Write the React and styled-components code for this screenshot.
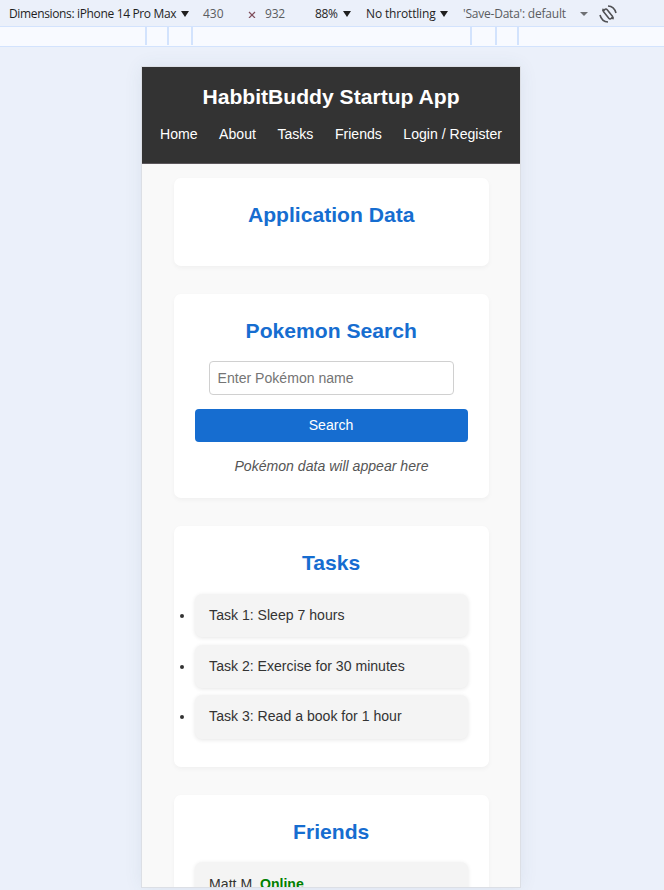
import React from "react";
import styled, { createGlobalStyle } from "styled-components";

const GlobalStyle = createGlobalStyle`
  *, *::before, *::after { box-sizing: border-box; }
  html, body { margin: 0; padding: 0; background: #ebf0fa; }
  body { height: 890px; overflow: hidden; font-family: "Liberation Sans", Arial, sans-serif; }
`;

const Screen = styled.div`
  width: 664px;
  height: 890px;
  overflow: hidden;
  background: #ebf0fa;
`;

const Toolbar = styled.div`
  display: flex;
  align-items: center;
  height: 26px;
  padding: 1px 0 0 9px;
  font-family: "Open Sans", "Noto Sans", sans-serif;
  font-size: 12px;
  color: #1f1f1f;
`;

const Cell = styled.div`
  display: flex;
  align-items: center;
  flex: none;
  width: ${(p) => p.$width}px;
  height: 22px;
  white-space: nowrap;
  color: ${(p) => (p.$muted ? "#5a5c60" : "#1f1f1f")};
`;

const Label = styled.span`
  flex: none;
  width: ${(p) => p.$width}px;
  letter-spacing: ${(p) => p.$spacing || 0}px;
`;

const Caret = styled.svg`
  display: block;
  flex: none;
  width: 8px;
  height: 6px;
  fill: ${(p) => (p.$muted ? "#6e7074" : "#1f1f1f")};
`;

const Icon = styled.svg`
  display: block;
  flex: none;
`;

const Ruler = styled.div`
  display: flex;
  height: 21px;
  border-top: 1px solid #d3e3fd;
  border-bottom: 1px solid #d3e3fd;
  background: #f8faff;
`;

const Segment = styled.div`
  flex: none;
  width: ${(p) => p.$width}px;
  height: 18px;
  border-right: 2px solid #d3e3fd;
`;

const Stage = styled.div`
  display: flex;
  justify-content: center;
  height: 843px;
  padding: 20px 2px 0 0;
`;

const Device = styled.div`
  width: 378px;
  height: 820px;
  overflow: hidden;
  background: #f9f9f9;
  box-shadow: 0 0 0 1px #dcdfe5, 0 0 18px rgba(60, 90, 110, 0.09);
  font-size: 14.08px;
  color: #333;
`;

const Header = styled.header`
  height: 97px;
  padding-top: 18px;
  background: #333;
  border-bottom: 1px solid #5c575c;
  color: #fff;
  text-align: center;
`;

const Title = styled.h1`
  margin: 0;
  font-size: 21.12px;
  line-height: 24px;
`;

const Nav = styled.nav`
  display: flex;
  justify-content: center;
  gap: 21.5px;
  margin-top: 17px;
  line-height: 16px;
`;

const NavLink = styled.a`
  color: #fff;
  white-space: nowrap;
`;

const Main = styled.main`
  display: flex;
  flex-direction: column;
  align-items: center;
  gap: 28.16px;
  padding-top: 14.4px;
`;

const Card = styled.section`
  flex: none;
  width: 315px;
  height: ${(p) => p.$height}px;
  padding: 21px 21px 0;
  border-radius: 7px;
  background: #fff;
  box-shadow: 0 2px 5px rgba(0, 0, 0, 0.04);
`;

const CardTitle = styled.h2`
  margin: 4px 0 0;
  padding-left: 0.4px;
  font-size: 21.12px;
  line-height: 24px;
  text-align: center;
  color: #166dd0;
`;

const SearchInput = styled.input`
  display: block;
  width: 245px;
  height: 34px;
  margin: 18px auto 14px;
  padding: 0 8px;
  border: 1px solid #d0d0d0;
  border-radius: 4px;
  background: #fff;
  font: 14.08px "Liberation Sans", Arial, sans-serif;
  &::placeholder { color: #757575; opacity: 1; }
`;

const SearchButton = styled.button`
  display: block;
  width: 273px;
  height: 33px;
  padding: 0 0 1px;
  border: 0;
  border-radius: 4px;
  background: #166dd0;
  color: #fff;
  font: 14.08px "Liberation Sans", Arial, sans-serif;
`;

const Hint = styled.p`
  margin: 16px 0 0;
  padding-left: 1px;
  line-height: 17px;
  text-align: center;
  font-style: italic;
  color: #555;
`;

const ItemList = styled.ul`
  display: flex;
  flex-direction: column;
  gap: 7.04px;
  margin: 18.6px 0 0;
  padding: 0;
  list-style: ${(p) => (p.$plain ? "none" : "disc")};
`;

const Item = styled.li`
  height: 43.6px;
  padding: 0 14.6px;
  border-radius: 7px;
  background: #f4f4f4;
  box-shadow: 0 1px 4px rgba(0, 0, 0, 0.1);
  line-height: 43px;
`;

const FriendItem = styled(Item)`
  line-height: 44px;
`;

const Status = styled.span`
  font-weight: bold;
  color: green;
`;

const DropCaret = ({ muted }) => (
  <Caret viewBox="0 0 8 6" $muted={muted}>
    <path d={muted ? "M0 1h8L4 5z" : "M0 0h8L4 6z"} />
  </Caret>
);

const links = ["Home", "About", "Tasks", "Friends", "Login / Register"];
const tasks = [
  "Task 1: Sleep 7 hours",
  "Task 2: Exercise for 30 minutes",
  "Task 3: Read a book for 1 hour",
];
const segments = [147, 22, 24, 279, 25, 22];

export default function App() {
  return (
    <>
      <GlobalStyle />
      <Screen>
        <Toolbar>
          <Cell $width={194}>
            <Label $width={172} $spacing={-0.35}>Dimensions: iPhone 14 Pro Max</Label>
            <DropCaret />
          </Cell>
          <Cell $width={45} $muted>430</Cell>
          <Cell $width={17}>
            <Icon width="8" height="8" viewBox="0 0 8 8">
              <path d="M1 2l6 6M7 2l-6 6" stroke="#80505c" strokeWidth="1.2" />
            </Icon>
          </Cell>
          <Cell $width={50} $muted>
            <Label $width={22} $spacing={-0.2}>932</Label>
          </Cell>
          <Cell $width={51}>
            <Label $width={28} $spacing={-0.4}>88%</Label>
            <DropCaret />
          </Cell>
          <Cell $width={97}>
            <Label $width={74} $spacing={-0.16}>No throttling</Label>
            <DropCaret />
          </Cell>
          <Cell $width={136} $muted>
            <Label $width={117} $spacing={-0.22}>'Save-Data': default</Label>
            <DropCaret muted />
          </Cell>
          <Icon width="18" height="18" viewBox="0 0 18 18" fill="none" stroke="#505154" strokeWidth="1.6">
            <path d="M4.4 3.8Q3.2 5.2 4.4 6.6L9.8 13.2Q11 14.6 12.3 13.4L13.4 12.3M4.6 5.7L5.7 4.6Q7 3.4 8.2 4.8L13.6 11.4Q14.8 12.8 13.6 14.2" />
            <path d="M9 1Q15.2 1.2 17 8M1 10Q2.8 16.8 9 17" />
          </Icon>
        </Toolbar>
        <Ruler>
          {segments.map((width, i) => <Segment key={i} $width={width} />)}
        </Ruler>
        <Stage>
          <Device>
            <Header>
              <Title>HabbitBuddy Startup App</Title>
              <Nav>{links.map((link) => <NavLink key={link}>{link}</NavLink>)}</Nav>
            </Header>
            <Main>
              <Card $height={87.6}><CardTitle>Application Data</CardTitle></Card>
              <Card $height={204}>
                <CardTitle>Pokemon Search</CardTitle>
                <SearchInput placeholder="Enter Pokémon name" />
                <SearchButton>Search</SearchButton>
                <Hint>Pokémon data will appear here</Hint>
              </Card>
              <Card $height={240.4}>
                <CardTitle>Tasks</CardTitle>
                <ItemList>{tasks.map((task) => <Item key={task}>{task}</Item>)}</ItemList>
              </Card>
              <Card $height={160}>
                <CardTitle>Friends</CardTitle>
                <ItemList $plain>
                  <FriendItem>Matt M. <Status>Online</Status></FriendItem>
                </ItemList>
              </Card>
            </Main>
          </Device>
        </Stage>
      </Screen>
    </>
  );
}
